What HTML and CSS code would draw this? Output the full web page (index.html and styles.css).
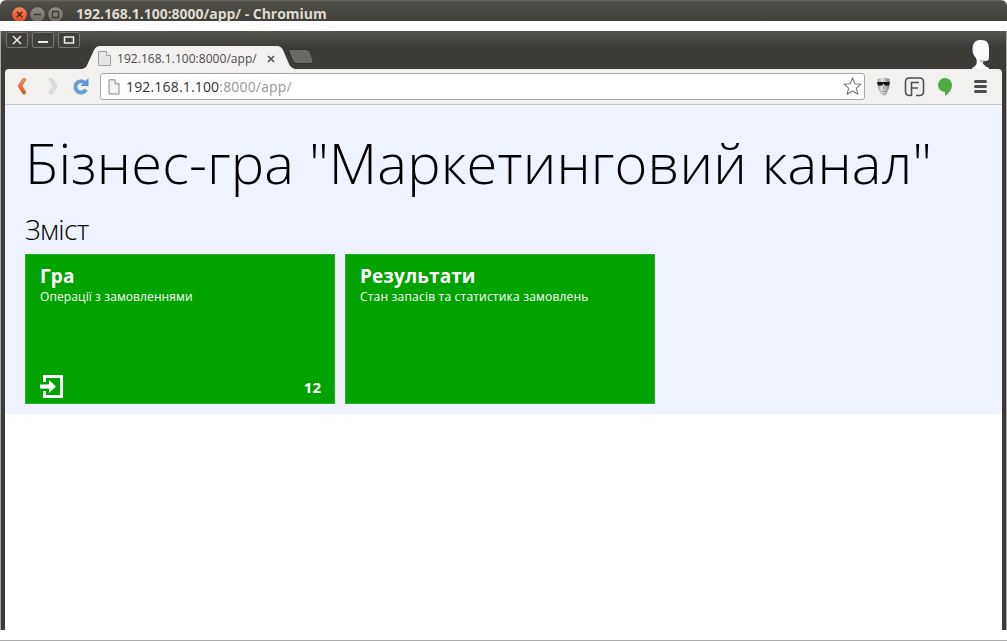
FILE: index.html
```html
<!DOCTYPE html>
<html lang="uk">
<head>
<meta charset="utf-8">
<title>192.168.1.100:8000/app/</title>
<link rel="stylesheet" href="styles.css">
</head>
<body>
<div class="screen">
  <header class="titlebar">
    <svg class="title-buttons" width="62" height="21" viewBox="0 0 62 21">
      <defs>
        <linearGradient id="orange" x2="0" y2="1"><stop stop-color="#f58a62"/><stop offset="1" stop-color="#df491c"/></linearGradient>
        <linearGradient id="gray" x2="0" y2="1"><stop stop-color="#918e84"/><stop offset="1" stop-color="#6b6962"/></linearGradient>
      </defs>
      <circle cx="15.5" cy="14.5" r="7.8" fill="url(#orange)" stroke="#33322d" stroke-width=".7"/>
      <circle cx="33.5" cy="14.5" r="7.8" fill="url(#gray)" stroke="#33322d" stroke-width=".7"/>
      <circle cx="51.5" cy="14.5" r="7.8" fill="url(#gray)" stroke="#33322d" stroke-width=".7"/>
      <path d="M12.8 11.8l5.4 5.4M18.2 11.8l-5.4 5.4" stroke="#56200f" stroke-width="1.4"/>
      <path d="M30 14.5h7M48.5 11.5h6v6h-6z" fill="none" stroke="#3c3b37" stroke-width="1.3"/>
    </svg>
    <span class="window-title">192.168.1.100:8000/app/ - Chromium</span>
  </header>

  <main class="window">
    <div class="tabstrip">
      <div class="controls">
        <span class="control"><svg width="20" height="14"><path d="M6 3l8 8M14 3l-8 8" stroke="#eee" stroke-width="1.500"/></svg></span>
        <span class="control"><svg width="20" height="14"><path d="M5 9h10" stroke="#eee" stroke-width="2"/></svg></span>
        <span class="control"><svg width="20" height="14"><path d="M5.500 4h9v6h-9z" fill="none" stroke="#eee" stroke-width="1.500"/></svg></span>
      </div>
      <div class="tab">
        <svg class="tab-shape" width="216" height="25" viewBox="0 0 216 25"><path d="M0 24C4 23 5 21 6 18L12 5Q14 1 18 1H195Q199 1 201 5L207 19Q209 23 213 24V25H0z" fill="#f2f1f0"/></svg>
        <svg class="tab-page" width="15" height="17" viewBox="0 0 15 17"><path d="M1.500 1.500h8l4 4v10h-12z" fill="#e6e6e6" stroke="#a0a0a0"/><path d="M9.500 1.500v4h4" fill="#fff" stroke="#a0a0a0"/></svg>
        <span class="tab-title">192.168.1.100:8000/app/</span>
        <svg class="tab-close" width="8" height="8"><path d="M1 1l6 6M7 1l-6 6" stroke="#555" stroke-width="1.700"/></svg>
      </div>
      <svg class="new-tab" width="26" height="16"><path d="M2 .5H18Q21 .5 22 3L25 11Q26 14.500 23 14.500H9Q6 14.500 5 12L1 3Q0 .5 2 .5z" fill="#6a6965" stroke="#33322e"/></svg>
      <svg class="avatar" width="20" height="30" viewBox="0 0 20 30"><defs><linearGradient id="face"><stop stop-color="#d5e3ed"/><stop offset=".25" stop-color="#fff"/><stop offset="1" stop-color="#f3f7fa"/></linearGradient></defs><path d="M1.500 9C2 2 6 1 10 1C16 1 18 4 18 10V18Q18 22 15 22L11.500 21.500Q11 26 18 29V30H1V29Q8 26 5 19Q1 15 1.500 9z" fill="url(#face)"/><path d="M14 22Q10 21.500 8 19.500L9.500 23.500Q11 24 14 22" fill="#b9cbd6"/></svg>
    </div>

    <div class="toolbar">
      <svg class="nav" width="92" height="35" viewBox="0 0 92 35">
        <defs><linearGradient id="back" x2="0" y2="1"><stop stop-color="#f19457"/><stop offset="1" stop-color="#d9541e"/></linearGradient></defs>
        <path d="M18 9.500Q20 8.500 21 10.500L17 17L21 23.500Q20 26 18 25L13 17z" fill="url(#back)" stroke="#d2632e" stroke-width=".7"/>
        <path d="M44 9.500Q46 8.500 48 10.500L52 17L47 25Q45 26 44 24L48 17z" fill="#dededc" stroke="#c8c8c5" stroke-width=".7"/>
        <path d="M79.500 13.500A5.600 5.600 0 1 0 81 20.500" fill="none" stroke="#6c9ed0" stroke-width="4"/>
        <path d="M83.500 9V17H75.500z" fill="#5f97cc"/>
      </svg>
      <div class="address">
        <svg class="page-icon" width="12" height="16" viewBox="0 0 12 16"><path d="M1 .8h6l4 4V15H1z" fill="#f4f4f4" stroke="#888"/><path d="M7 .8v4h4" fill="#fff" stroke="#888"/></svg>
        <span class="url">192.168.1.100<span class="url-path">:8000/app/</span></span>
        <svg class="star" width="19" height="19" viewBox="0 0 19 19"><path d="M9.500 1L11.900 6.700L18 7.200L13.400 11.200L14.900 17.300L9.500 14L4.100 17.300L5.600 11.200L1 7.200L7.100 6.700z" fill="#fff" stroke="#777" stroke-width="1.100" stroke-linejoin="round"/></svg>
      </div>
      <svg class="extensions" width="137" height="35" viewBox="865 69 137 35">
        <defs><linearGradient id="mask"><stop stop-color="#999"/><stop offset=".4" stop-color="#e8e8e8"/><stop offset="1" stop-color="#777"/></linearGradient></defs>
        <path d="M877.500 79Q883.500 76 889.500 79L889 88L886 95L883.500 96L881 95L878 88z" fill="url(#mask)"/>
        <path d="M877 82h13l-.8 3.500h-4.500l-1.200-2l-1.200 2h-4.500z" fill="#161616"/>
        <path d="M883.500 86v4M881 91.500h5M882 94h3" stroke="#888" stroke-width=".8"/>
        <path d="M911 95.500H909.500Q905.500 95.500 905.500 91.500V82Q905.500 78 909.500 78H919.500Q923.500 78 923.500 82V91.500Q923.500 95.500 919.500 95.500H916M911.500 96V82.500H919M912 88H918" fill="none" stroke="#505050" stroke-width="1.600"/>
        <path d="M945 78a7 7 0 0 1 7 7Q952 91 945 96V92a7 7 0 0 1 0-14" fill="#51a846"/>
        <path d="M975.500 81.500h10M975.500 86.500h10M975.500 91.500h10" stroke="#4c4c4a" stroke-width="3" stroke-linecap="round"/>
      </svg>
    </div>

    <section class="page">
      <div class="contents">
        <h1 class="heading">Бізнес-гра "Маркетинговий канал"</h1>
        <h2 class="subheading">Зміст</h2>
        <div class="tiles">
          <article class="tile">
            <h3 class="tile-title">Гра</h3>
            <p class="tile-text">Операції з замовленнями</p>
            <div class="tile-status">
              <svg width="24" height="24" viewBox="0 0 24 24"><path d="M3 7V0H23V23H3V16H6V20H20V3H6V7z" fill="#fff"/><path d="M0 9.500H9V5L16 11.500L9 18V13.500H0z" fill="#fff"/></svg>
              <span class="badge">12</span>
            </div>
          </article>
          <article class="tile">
            <h3 class="tile-title">Результати</h3>
            <p class="tile-text tile-text-wide">Стан запасів та статистика замовлень</p>
          </article>
        </div>
      </div>
    </section>
  </main>
</div>
</body>
</html>
```

FILE: styles.css
```css
* { box-sizing: border-box; }
body { margin: 0; background: #fff; font-family: "Open Sans", "Noto Sans", sans-serif; }
svg { display: block; flex: none; }
.screen { width: 1007px; height: 641px; overflow: hidden; border-bottom: 1px solid #aaa; }
.titlebar { display: flex; height: 21px; background: linear-gradient(#6b6962 0, #504f48 2px, #403f3a 21px); border-radius: 6px 6px 0 0; }
.title-buttons { margin-left: 4px; }
.window-title { height: 21px; margin-left: 10px; color: #dfdbd2; font-size: 14px; font-weight: 700; line-height: 27px; letter-spacing: -.03px; white-space: nowrap; }
.window { height: 599px; position: relative; margin-top: 10px; background: #3c3b37; border-left: 1px solid #aaa9a5; border-right: 1px solid #aaa9a5; padding: 0 4px; }
.tabstrip { display: flex; height: 38px; margin: 0 -4px; padding-left: 5px; background: linear-gradient(#565550, #3c3b37 16px); }
.controls { display: flex; gap: 4px; padding-top: 1px; }
.control { display: block; width: 22px; height: 16px; border: 1px solid #777670; border-radius: 2px; background: #403f3a; }
.tab { display: grid; grid-template-columns: 16px 19px 153px 28px; width: 216px; height: 25px; margin: 13px 0 0 2px; align-items: center; }
.tab-shape { grid-area: 1 / 1 / 2 / 5; }
.tab-page { grid-area: 1 / 2; margin: 2px 0 0 -1px; }
.tab-title { grid-area: 1 / 3; padding: 2px 0 0; color: #4b4b4b; font-size: 12px; line-height: 25px; letter-spacing: .04px; white-space: nowrap; }
.tab-close { grid-area: 1 / 4; margin: 2px 0 0 -3px; }
.new-tab { margin: 18px 0 0 -10px; }
.avatar { margin: 8px 15px 0 auto; }
.toolbar { display: flex; height: 36px; background: #f2f1f0; border-bottom: 1px solid #c8c6c2; border-radius: 4px 4px 0 0; }
.nav { margin-right: 3px; }
.address { display: flex; align-items: center; width: 765px; height: 27px; margin-top: 4px; padding: 0 2px 0 7px; border: 1px solid #a9a9a4; border-radius: 3px; background: #fff; }
.url { margin-left: 6px; color: #333; font-size: 14px; line-height: 25px; letter-spacing: .17px; white-space: nowrap; }
.url-path { color: #999; }
.star { margin-left: auto; }
.page { height: 525px; background: #fff; }
.contents { height: 309px; padding: 25px 20px 0; background: #eff3ff; color: #000; }
.heading { margin: 0; font-size: 56px; font-weight: 300; line-height: 64px; letter-spacing: .17px; white-space: nowrap; }
.subheading { margin: 18px 0 8px; font-size: 28px; font-weight: 300; line-height: 34px; letter-spacing: -.6px; }
.tiles { display: flex; gap: 10px; }
.tile { display: flex; flex-direction: column; width: 310px; height: 150px; padding: 10px 12px 4px 14px; border: 1px solid #29ad29; background: #00a300; color: #fff; }
.tile-title { margin: 0; font-size: 19px; font-weight: 700; line-height: 22px; letter-spacing: .1px; }
.tile-text { margin: 1px 0 0; font-size: 12px; line-height: 18px; letter-spacing: .1px; }
.tile-text-wide { letter-spacing: .2px; }
.tile-status { display: flex; justify-content: space-between; align-items: center; margin-top: auto; }
.badge { font-size: 15px; font-weight: 700; line-height: 20px; margin-right: 1px; padding-bottom: 1px; }
```
